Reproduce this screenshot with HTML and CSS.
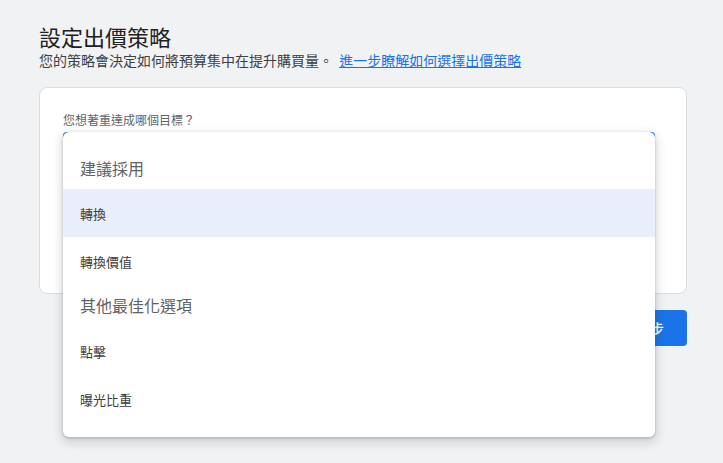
FILE: index.html
```html
<!DOCTYPE html>
<html lang="zh-Hant">
<head>
<meta charset="utf-8">
<link rel="stylesheet" href="styles.css">
</head>
<body>
<main class="page">
  <h1 class="title">設定出價策略</h1>
  <p class="subtitle">您的策略會決定如何將預算集中在提升購買量。 <a class="link" href="#">進一步瞭解如何選擇出價策略</a></p>
  <section class="card">
    <div class="label">您想著重達成哪個目標？</div>
    <div class="field">
      <div class="select"></div>
      <div class="menu">
        <div class="group first">建議採用</div>
        <div class="item active">轉換</div>
        <div class="item">轉換價值</div>
        <div class="group">其他最佳化選項</div>
        <div class="item">點擊</div>
        <div class="item">曝光比重</div>
      </div>
    </div>
  </section>
  <div class="actions">
    <button class="next">下一步</button>
  </div>
</main>
</body>
</html>
```
FILE: styles.css
```css
html, body {
  margin: 0;
  padding: 0;
  background: #f1f2f4;
  font-family: "Noto Sans CJK TC", "Noto Sans", Roboto, sans-serif;
}
body {
  min-height: 463px;
}
.page {
  width: 648px;
  min-height: 441px;
  padding: 22px 0 0 39px;
}
.title {
  margin: 0;
  font-size: 22px;
  line-height: 28px;
  font-weight: 400;
  color: #202124;
}
.subtitle {
  margin: 0;
  font-size: 14px;
  line-height: 20px;
  color: #3c4043;
}
.link {
  margin-left: 3px;
  color: #1a73e8;
  text-decoration: underline;
}
.card {
  margin-top: 17px;
  background: #fff;
  border: 1px solid #dadce0;
  border-radius: 8px;
  padding: 24px 31px 0 23px;
  height: 181px;
}
.label {
  font-size: 12px;
  line-height: 16px;
  color: #5f6368;
  margin-bottom: 4px;
}
.field {
  position: relative;
  height: 56px;
}
.select {
  height: 52px;
  border: 2px solid #1a73e8;
  border-radius: 4px;
}
.menu {
  position: absolute;
  top: 0;
  left: 0;
  right: 0;
  background: #fff;
  border-radius: 6px;
  box-shadow: 0 1px 3px rgba(60, 64, 67, 0.3), 0 4px 8px 3px rgba(60, 64, 67, 0.15);
  padding-bottom: 14px;
  z-index: 2;
}
.group {
  padding: 8px 17px 10px;
  font-size: 16px;
  line-height: 24px;
  color: #5f6368;
}
.group.first {
  padding-top: 24px;
  padding-bottom: 9px;
}
.item {
  height: 48px;
  display: flex;
  align-items: center;
  padding: 0 17px;
  font-size: 13px;
  color: #3c4043;
}
.item.active {
  background: #e8effb;
}
.actions {
  display: flex;
  justify-content: flex-end;
  margin-top: 16px;
}
.next {
  height: 36px;
  padding: 0 23px;
  border: none;
  border-radius: 4px;
  background: #1a73e8;
  color: #fff;
  font-family: "Noto Sans CJK TC", "Noto Sans", sans-serif;
  font-size: 14px;
  font-weight: 500;
}
```
